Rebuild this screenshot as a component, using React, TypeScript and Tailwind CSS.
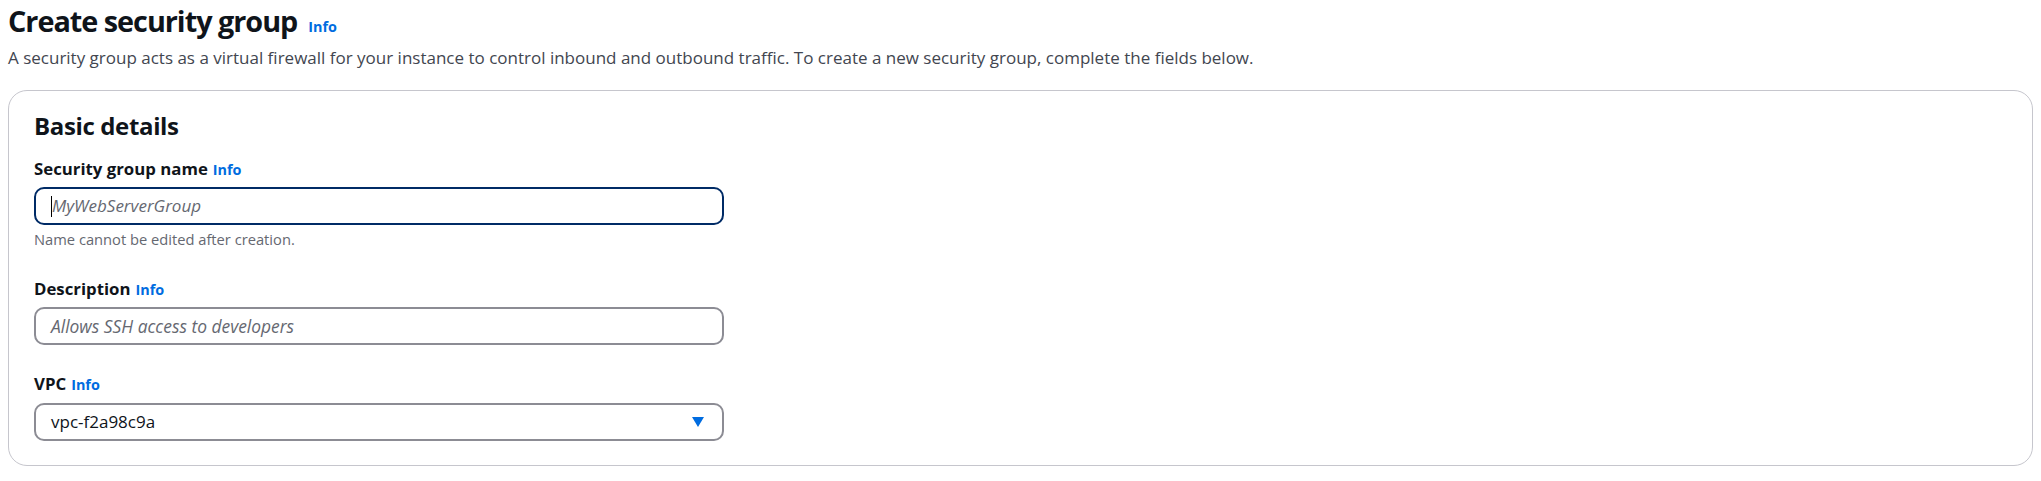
const InfoLink = () => (
  <a href="#" className="text-[14.4px] font-bold leading-none text-[#006ce0]">
    Info
  </a>
);

function FieldLabel({ children }: { children: string }) {
  return (
    <div className="flex items-baseline gap-[5px] text-[16.8px] leading-[24px]">
      <span className="font-bold text-[#0f141a]">{children}</span>
      <InfoLink />
    </div>
  );
}

export default function App() {
  return (
    <div className="min-h-screen bg-white px-2 pt-[3px] font-['Open_Sans',sans-serif]">
      <div className="flex items-baseline gap-[11px]">
        <h1 className="text-[28.8px] font-bold leading-[36px] tracking-[-0.035em] text-[#0f141a]">
          Create security group
        </h1>
        <InfoLink />
      </div>
      <p className="mt-[7px] text-[17px] leading-[24px] text-[#424650]">
        A security group acts as a virtual firewall for your instance to control inbound and outbound
        traffic. To create a new security group, complete the fields below.
      </p>

      <section className="mt-[20px] rounded-[19px] border border-[#c6c6cd] px-[25px] pt-[20px] pb-[24px]">
        <h2 className="text-[24px] font-bold leading-[29px] tracking-[-0.015em] text-[#0f141a]">
          Basic details
        </h2>

        <div className="mt-[17px] w-[690px]">
          <FieldLabel>Security group name</FieldLabel>
          <div className="mt-[6px] flex h-[38px] items-center rounded-[10px] border-2 border-[#002b66] px-[15px]">
            <span className="h-[21px] w-px bg-black" />
            <span className="text-[17px] italic text-[#656871]">MyWebServerGroup</span>
          </div>
          <p className="mt-[5px] text-[14.7px] leading-[19px] text-[#656871]">
            Name cannot be edited after creation.
          </p>
        </div>

        <div className="mt-[28px] w-[690px]">
          <FieldLabel>Description</FieldLabel>
          <div className="mt-[6px] flex h-[38px] items-center rounded-[10px] border-2 border-[#8c8c94] px-[15px]">
            <span className="text-[17.4px] italic text-[#656871]">Allows SSH access to developers</span>
          </div>
        </div>

        <div className="mt-[27px] w-[690px]">
          <FieldLabel>VPC</FieldLabel>
          <button
            type="button"
            className="mt-[7px] flex h-[38px] w-full items-center justify-between rounded-[10px] border-2 border-[#8c8c94] pl-[15px] pr-[18px]"
          >
            <span className="text-[17px] text-[#0f141a]">vpc-f2a98c9a</span>
            <svg width="12" height="10" viewBox="0 0 12 10" aria-hidden="true">
              <polygon points="0,0 12,0 6,10" fill="#006ce0" />
            </svg>
          </button>
        </div>
      </section>
    </div>
  );
}
